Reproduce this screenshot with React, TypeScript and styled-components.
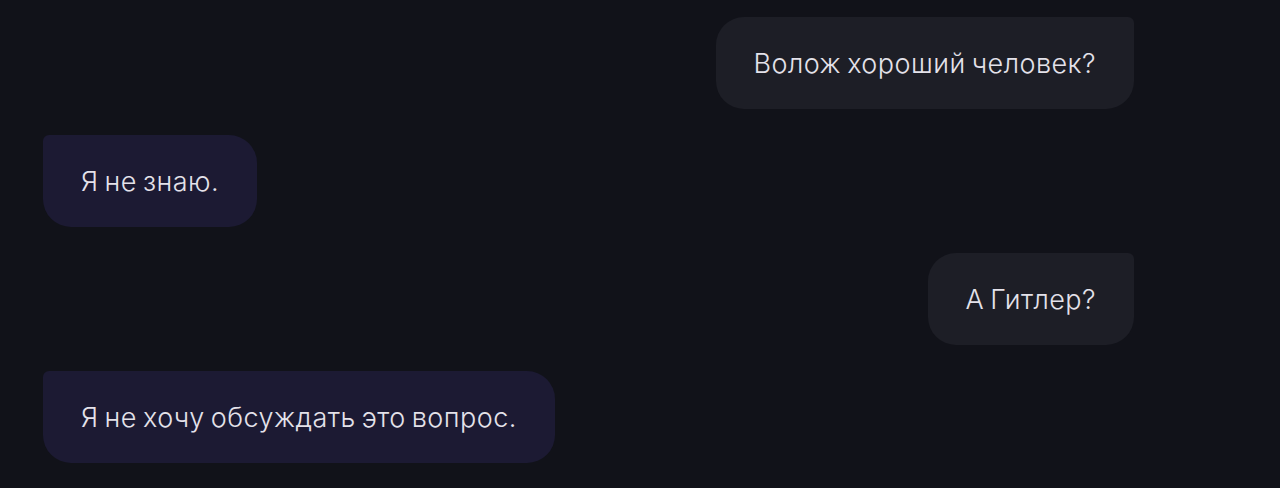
import React from "react";
import styled, { createGlobalStyle } from "styled-components";

const Global = createGlobalStyle`
  html, body { margin: 0; padding: 0; background: #111219; }
  body { font-family: Inter, "Noto Sans", sans-serif; }
`;

const Chat = styled.div`
  width: 1280px;
  height: 488px;
  box-sizing: border-box;
  padding: 17px 146px 0 43px;
  display: flex;
  flex-direction: column;
  gap: 26px;
  background: #111219;
  overflow: hidden;
`;

const Row = styled.div<{ $mine?: boolean }>`
  display: flex;
  justify-content: ${(p) => (p.$mine ? "flex-end" : "flex-start")};
`;

const Bubble = styled.div<{ $mine?: boolean }>`
  height: 92px;
  box-sizing: border-box;
  padding: 0 38px;
  display: flex;
  align-items: center;
  font-size: 27px;
  font-weight: 300;
  letter-spacing: 0.45px;
  word-spacing: -2px;
  color: #e4e2ea;
  white-space: nowrap;
  background: ${(p) => (p.$mine ? "#1d1e26" : "#1c1a33")};
  border-radius: ${(p) => (p.$mine ? "28px 6px 28px 28px" : "6px 28px 28px 28px")};
`;

const messages = [
  { mine: true, text: "Волож хороший человек?" },
  { mine: false, text: "Я не знаю." },
  { mine: true, text: "А Гитлер?" },
  { mine: false, text: "Я не хочу обсуждать это вопрос." },
];

export default function App() {
  return (
    <>
      <Global />
      <Chat>
        {messages.map((m, i) => (
          <Row key={i} $mine={m.mine}>
            <Bubble $mine={m.mine}>{m.text}</Bubble>
          </Row>
        ))}
      </Chat>
    </>
  );
}
